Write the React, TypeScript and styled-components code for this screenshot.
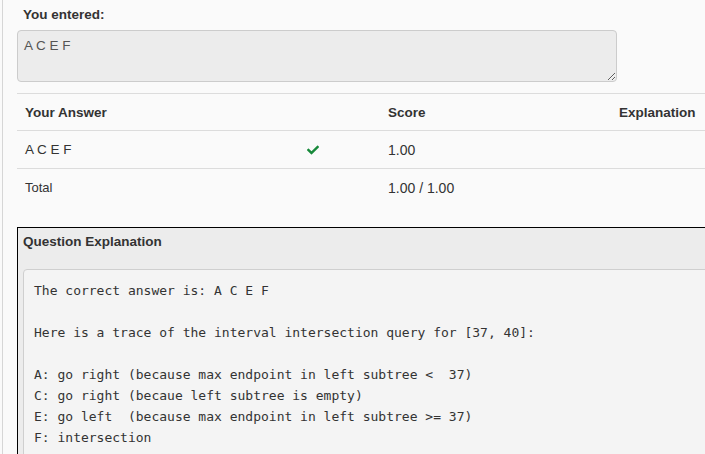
import { createGlobalStyle } from 'styled-components';
import styled from 'styled-components';
import { FaCheck } from 'react-icons/fa';

const GlobalStyle = createGlobalStyle`
  html, body {
    margin: 0;
    padding: 0;
    background: #fafafa;
    overflow: hidden;
  }
  body {
    font-family: "Liberation Sans", Arial, sans-serif;
    color: #333;
  }
`;

const Page = styled.div`
  margin-left: 2px;
  border-left: 1px solid #d6d6d6;
  padding: 5px 0 0 14px;
  min-height: 454px;
  width: 740px;
  box-sizing: border-box;
`;

const Label = styled.div`
  font-size: 13.5px;
  font-weight: bold;
  line-height: 20px;
  padding-left: 6px;
  margin-bottom: 5px;
`;

const AnswerBox = styled.textarea`
  display: block;
  box-sizing: border-box;
  width: 600px;
  height: 52px;
  margin: 0;
  padding: 6px 6px;
  font-family: "Liberation Sans", Arial, sans-serif;
  font-size: 13.5px;
  line-height: 18px;
  color: #555;
  background: #ececec;
  border: 1px solid #ccc;
  border-radius: 4px;
  outline: none;
`;

const ResultTable = styled.table`
  width: 724px;
  margin-top: 11px;
  border-collapse: collapse;
  font-size: 13.5px;
`;

const HeadCell = styled.th<{ $width?: number }>`
  text-align: left;
  width: ${(p) => (p.$width ? `${p.$width}px` : 'auto')};
  font-weight: bold;
  height: 37px;
  padding: 0 8px;
  border-top: 1px solid #dcdcdc;
  box-sizing: border-box;
`;

const Cell = styled.td<{ $size?: number }>`
  height: 37px;
  padding: 0 8px;
  border-top: 1px solid #dcdcdc;
  font-size: ${(p) => p.$size || 13.5}px;
  vertical-align: middle;
`;

const CheckMark = styled(FaCheck)`
  color: #17893a;
  width: 12px;
  height: 12px;
  display: block;
`;

const Panel = styled.section`
  margin-top: 21px;
  border: 1px solid #000;
  background: #ececec;
  width: 720px;
  padding: 4px 0 0 5px;
  box-sizing: border-box;
  min-height: 240px;
`;

const PanelTitle = styled.h4`
  margin: 0 0 17px;
  font-size: 13.5px;
  font-weight: bold;
  line-height: 20px;
`;

const Code = styled.pre`
  margin: 0;
  padding: 9.5px 10px;
  background: #f4f4f4;
  border: 1px solid #cfcfcf;
  border-radius: 4px;
  font-family: "DejaVu Sans Mono", Menlo, monospace;
  font-size: 13px;
  line-height: 21px;
  color: #333;
  min-height: 200px;
`;

const trace = `The correct answer is: A C E F

Here is a trace of the interval intersection query for [37, 40]:

A: go right (because max endpoint in left subtree <  37)
C: go right (becaue left subtree is empty)
E: go left  (because max endpoint in left subtree >= 37)
F: intersection`;

export default function App() {
  return (
    <>
      <GlobalStyle />
      <Page>
        <Label>You entered:</Label>
        <AnswerBox readOnly defaultValue="A C E F" />
        <ResultTable>
          <thead>
            <tr>
              <HeadCell $width={282}>Your Answer</HeadCell>
              <HeadCell $width={81}></HeadCell>
              <HeadCell $width={231}>Score</HeadCell>
              <HeadCell>Explanation</HeadCell>
            </tr>
          </thead>
          <tbody>
            <tr>
              <Cell $size={13.5}>A C E F</Cell>
              <Cell>
                <CheckMark />
              </Cell>
              <Cell $size={14}>1.00</Cell>
              <Cell></Cell>
            </tr>
            <tr>
              <Cell $size={13}>Total</Cell>
              <Cell></Cell>
              <Cell $size={14}>1.00 / 1.00</Cell>
              <Cell></Cell>
            </tr>
          </tbody>
        </ResultTable>
        <Panel>
          <PanelTitle>Question Explanation</PanelTitle>
          <Code>{trace}</Code>
        </Panel>
      </Page>
    </>
  );
}
